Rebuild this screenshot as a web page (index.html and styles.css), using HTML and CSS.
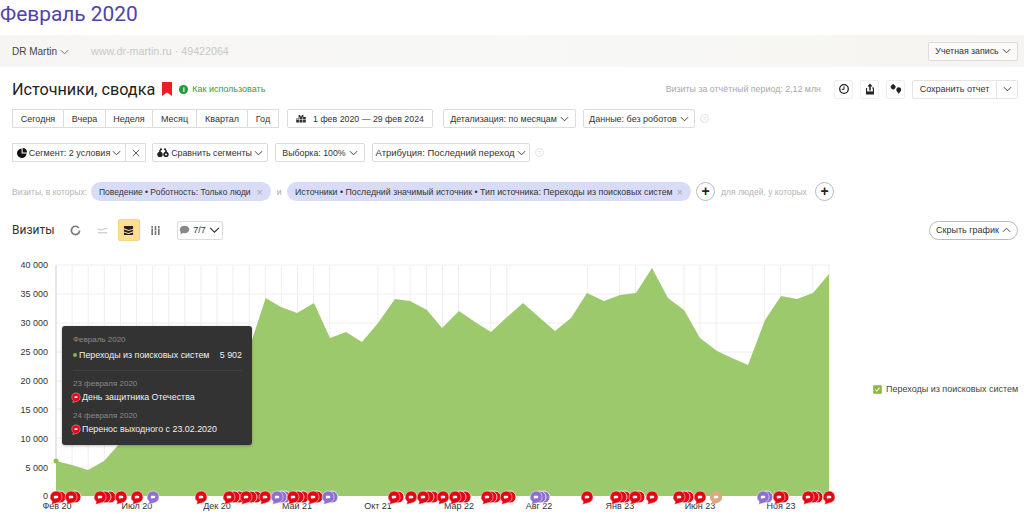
FILE: index.html
```html
<!DOCTYPE html>
<html lang="ru">
<head>
<meta charset="utf-8">
<title>Февраль 2020</title>
<link rel="stylesheet" href="styles.css">
</head>
<body>
<svg class="sprite" width="0" height="0" aria-hidden="true">
  <defs>
    <symbol id="chev" viewBox="0 0 10 6"><path d="M1 1l4 4 4-4" fill="none" stroke="currentColor" stroke-width="1"/></symbol>
    <g id="fr"><path d="M0-6a6 6 0 0 1 2.600 11.400L-4.500 7.500l.7-2.900A6 6 0 0 1 0-6z" fill="#e30613" stroke="#fff" stroke-width=".5"/><path d="M-1.400-1.200h2.800a.8.8 0 0 1 .8.8v.8a.8.8 0 0 1-.8.8h-1.900l-1.100.8v-.8a.8.8 0 0 1-.6-.8v-.8a.8.8 0 0 1 .8-.8z" fill="#fff"/></g>
    <g id="fb"><circle r="6" fill="#e30613" stroke="#fff" stroke-width=".8"/></g>
    <g id="pr"><path d="M0-6a6 6 0 0 1 2.600 11.400L-4.500 7.500l.7-2.900A6 6 0 0 1 0-6z" fill="#8f6fd0" stroke="#fff" stroke-width=".5"/><path d="M-1.400-1.200h2.800a.8.8 0 0 1 .8.8v.8a.8.8 0 0 1-.8.8h-1.900l-1.100.8v-.8a.8.8 0 0 1-.6-.8v-.8a.8.8 0 0 1 .8-.8z" fill="#fff"/></g>
    <g id="pb"><circle r="6" fill="#8f6fd0" stroke="#fff" stroke-width=".8"/></g>
    <g id="or"><path d="M0-6a6 6 0 0 1 2.600 11.400L-4.500 7.500l.7-2.900A6 6 0 0 1 0-6z" fill="#e0a582"/><path d="M-1.400-1.200h2.800a.8.8 0 0 1 .8.8v.8a.8.8 0 0 1-.8.8h-1.900l-1.100.8v-.8a.8.8 0 0 1-.6-.8v-.8a.8.8 0 0 1 .8-.8z" fill="#fff"/></g>
  </defs>
</svg>

<h1 class="page-title">Февраль 2020</h1>

<header class="topbar">
  <span class="topbar-name">DR Martin <svg class="chev chev-thin"><use href="#chev"/></svg></span>
  <span class="topbar-site">www.dr-martin.ru · 49422064</span>
  <button class="btn btn-account">Учетная запись <svg class="chev"><use href="#chev"/></svg></button>
</header>

<section class="report-head">
  <h2 class="report-title">Источники, сводка</h2>
  <svg class="bookmark" viewBox="0 0 10 14"><path d="M0 0h10v14L5 10.500 0 14z"/></svg>
  <a class="howto"><span class="howto-dot">i</span>Как использовать</a>
  <span class="report-meta">Визиты за отчётный период: 2,12 млн</span>
  <button class="btn btn-icon"><svg viewBox="0 0 12 12"><circle cx="6" cy="6" r="4.300" fill="none" stroke="#222" stroke-width="1.300"/><path d="M6 3.400V6.400H3.800" fill="none" stroke="#222"/></svg></button>
  <button class="btn btn-icon"><svg viewBox="0 0 12 12"><path d="M6 .5L3.400 3.400h1.800v4h1.600v-4h1.800z" fill="#222"/><path d="M2.600 5v6h6.800V5H8.200" fill="none" stroke="#222" stroke-width="1.100"/><path d="M2.600 8.400h6.800V11H2.600z" fill="#222"/></svg></button>
  <button class="btn btn-icon"><svg viewBox="0 0 12 12"><path d="M3.200.8L4.200 1.900a2.300 2.300 0 1 1-2.100 0z" fill="#222"/><path d="M8.700 4.300a2.400 2.400 0 0 1 2.400 2.600c0 .4-.1.700-.3 1L8.700 10.700 6.600 7.900a2.400 2.400 0 0 1 2.100-3.600z" fill="#222"/></svg></button>
  <div class="split">
    <button class="btn split-main">Сохранить отчет</button>
    <button class="btn split-caret"><svg class="chev"><use href="#chev"/></svg></button>
  </div>
</section>

<section class="controls controls-a">
  <div class="group">
    <button class="btn g1">Сегодня</button>
    <button class="btn g2">Вчера</button>
    <button class="btn g3">Неделя</button>
    <button class="btn g4">Месяц</button>
    <button class="btn g5">Квартал</button>
    <button class="btn g6">Год</button>
  </div>
  <button class="btn btn-date"><svg class="cal" viewBox="0 0 12 10"><path d="M3 0h2v1.500h2V0h2v2.500h3v7H0v-5h3z" fill="#333"/><path d="M0 5.600h12M4 2.500v7M8 2.500v7" stroke="#fff" stroke-width=".7"/></svg>1 фев 2020 — 29 фев 2024</button>
  <button class="btn btn-detail">Детализация: по месяцам <svg class="chev"><use href="#chev"/></svg></button>
  <button class="btn btn-data">Данные: без роботов <svg class="chev"><use href="#chev"/></svg></button>
  <span class="hint">?</span>
</section>

<section class="controls controls-b">
  <div class="group">
    <button class="btn btn-seg"><svg class="ico9" viewBox="0 0 10 10"><path d="M4.600.4v5h5A4.800 4.800 0 1 1 4.600.4z" fill="#111"/><path d="M5.600 0a4.500 4.500 0 0 1 4.400 4.400H5.600z" fill="#111"/></svg>Сегмент: 2 условия <svg class="chev"><use href="#chev"/></svg></button>
    <button class="btn btn-x"><svg viewBox="0 0 10 10"><path d="M1 1l8 8M9 1l-8 8" stroke="#333" stroke-width="1" fill="none"/></svg></button>
  </div>
  <button class="btn btn-compare"><svg class="ico12" viewBox="0 0 12 10"><circle cx="3" cy="6.400" r="2.700" fill="#222"/><circle cx="9" cy="6.400" r="2.700" fill="#222"/><path d="M3 1.200h2M7 1.200h2" stroke="#222" stroke-width="1.600"/><path d="M3 2v2M9 2v2" stroke="#222" stroke-width="1.600"/><circle cx="9" cy="6.400" r="1" fill="#fff"/></svg>Сравнить сегменты <svg class="chev"><use href="#chev"/></svg></button>
  <button class="btn btn-sample">Выборка: 100% <svg class="chev"><use href="#chev"/></svg></button>
  <button class="btn btn-attr">Атрибуция: Последний переход <svg class="chev"><use href="#chev"/></svg></button>
  <span class="hint">?</span>
</section>

<section class="filters">
  <span class="filters-label">Визиты, в которых:</span>
  <span class="pill pill-a">Поведение • Роботность: Только люди <i class="pill-x">×</i></span>
  <span class="filters-and">и</span>
  <span class="pill pill-b">Источники • Последний значимый источник • Тип источника: Переходы из поисковых систем <i class="pill-x">×</i></span>
  <button class="round">+</button>
  <span class="filters-label filters-people">для людей, у которых</span>
  <button class="round">+</button>
</section>

<section class="chart-head">
  <h3 class="chart-title">Визиты</h3>
  <span class="type"><svg viewBox="0 0 12 12"><path d="M9.600 3.200A4.500 4.500 0 1 0 10.500 6" fill="none" stroke="#777" stroke-width="1.800"/></svg></span>
  <span class="type"><svg viewBox="0 0 12 12"><path d="M1 4.500l3 1 3-1 4-1" fill="none" stroke="#bbb"/><path d="M1 8.500h10" stroke="#bbb"/></svg></span>
  <span class="type type-active"><svg viewBox="0 0 12 12"><path d="M1 1h10v3L6 5.400 1 3.600z" fill="#222"/><path d="M1 4.800l5 1.800 5-1.400v1.600L6 8.600 1 7z" fill="#222"/><path d="M1 8.200l5 1.600 5-1.600V11H1z" fill="#222"/></svg></span>
  <span class="type"><svg viewBox="0 0 12 12"><path d="M1.500 1h1.800v10H1.500zM5.100 1h1.800v10H5.100zM8.700 1h1.800v10H8.700z" fill="#777"/><path d="M1 3.500h3M5 6h3M8.500 3.800h3" stroke="#fff" stroke-width=".6"/></svg></span>
  <button class="btn btn-notes"><svg viewBox="0 0 12 11"><path d="M6 .8c3 0 5.200 1.800 5.200 4.200S9 9.200 6 9.200c-.8 0-1.500-.1-2.100-.3L1.400 10.400l.5-2.500C1.200 7.100.8 6.100.8 5 .8 2.600 3 .8 6 .8z" fill="#888"/></svg>7/7 <svg class="chev"><use href="#chev"/></svg></button>
  <button class="btn btn-hide">Скрыть график <svg class="chev chev-up"><use href="#chev"/></svg></button>
</section>

<section class="chart">
  <svg class="plot" viewBox="0 255 860 262">
    <path class="grid" d="M56 265H829M56 294H829M56 323H829M56 352H829M56 381H829M56 409H829M56 438H829M56 467H829M72.100 265V496M88.200 265V496M104.300 265V496M120.400 265V496M136.500 265V496M152.600 265V496M168.700 265V496M184.800 265V496M200.900 265V496M217 265V496M233.100 265V496M249.200 265V496M265.300 265V496M281.400 265V496M297.500 265V496M313.600 265V496M329.700 265V496M378 265V496M394.100 265V496M410.200 265V496M426.300 265V496M442.400 265V496M458.500 265V496M490.700 265V496M506.800 265V496M587.300 265V496M619.500 265V496M635.600 265V496M684 265V496M700.100 265V496M716.200 265V496M764.500 265V496M780.600 265V496M812.800 265V496M829 265V496"/>
    <path class="axis" d="M56 265V462"/>
    <path class="area" d="M56 461L72 465L88 470L104 461L120 443L136 425L152 410L168 400L185 390L201 380L217 372L233 360L249 352L252 340L265.700 298L281 307L297 313L314 303L330 338L346 332L362 342L378 323L395 299L410 301L427 310L442 328L459 311L475 322L491 332L507 317L523 303L540 318L555 331L571 318L587 293L604 301L620 295L636 293L652 268L668 298L684 310L700 338L717 351L732 358L748 365L765 320L781 296L797 299L813 293L829 274V496H56z"/>
    <circle class="dot" cx="56" cy="461" r="2.500"/>
    <g class="y-labels">
      <text x="48" y="268">40 000</text><text x="48" y="297">35 000</text><text x="48" y="326">30 000</text><text x="48" y="355">25 000</text><text x="48" y="384">20 000</text><text x="48" y="413">15 000</text><text x="48" y="442">10 000</text><text x="48" y="471">5 000</text><text x="48" y="499">0</text>
    </g>
    <g class="x-labels">
      <text x="57" y="509">Фев 20</text><text x="137" y="509">Июл 20</text><text x="217" y="509">Дек 20</text><text x="297" y="509">Май 21</text><text x="378" y="509">Окт 21</text><text x="459" y="509">Мар 22</text><text x="539" y="509">Авг 22</text><text x="620" y="509">Янв 23</text><text x="700" y="509">Июн 23</text><text x="781" y="509">Ноя 23</text>
    </g>
    <g class="flags">
      <use href="#fb" x="60" y="497"/><use href="#fr" x="56" y="497"/>
      <use href="#fb" x="75" y="497"/><use href="#fr" x="71" y="497"/>
      <use href="#fb" x="110" y="497"/><use href="#fb" x="105" y="497"/><use href="#fr" x="100" y="497"/>
      <use href="#fr" x="121" y="497"/><use href="#fr" x="137" y="497"/><use href="#pr" x="153" y="497"/><use href="#fr" x="201" y="497"/>
      <use href="#fb" x="239" y="497"/><use href="#fb" x="234" y="497"/><use href="#fr" x="229" y="497"/>
      <use href="#fb" x="256" y="497"/><use href="#fb" x="251" y="497"/><use href="#fr" x="246" y="497"/>
      <use href="#fr" x="265" y="497"/>
      <use href="#pb" x="285" y="497"/><use href="#pb" x="281" y="497"/><use href="#pr" x="277" y="497"/>
      <use href="#fb" x="303" y="497"/><use href="#fb" x="298" y="497"/><use href="#fr" x="293" y="497"/>
      <use href="#fb" x="317" y="497"/><use href="#fr" x="313" y="497"/>
      <use href="#pb" x="332" y="497"/><use href="#pr" x="328" y="497"/>
      <use href="#fb" x="398" y="497"/><use href="#fr" x="394" y="497"/>
      <use href="#fr" x="411" y="497"/>
      <use href="#fb" x="433" y="497"/><use href="#fb" x="428" y="497"/><use href="#fr" x="423" y="497"/>
      <use href="#fr" x="443" y="497"/>
      <use href="#fb" x="465" y="497"/><use href="#fb" x="460" y="497"/><use href="#fr" x="455" y="497"/>
      <use href="#fb" x="495" y="497"/><use href="#fb" x="491" y="497"/><use href="#fr" x="487" y="497"/>
      <use href="#fb" x="510" y="497"/><use href="#fr" x="506" y="497"/>
      <use href="#pb" x="544" y="497"/><use href="#pb" x="540" y="497"/><use href="#pr" x="536" y="497"/>
      <use href="#fr" x="587" y="497"/>
      <use href="#fb" x="625" y="497"/><use href="#fb" x="621" y="497"/><use href="#fr" x="616" y="497"/>
      <use href="#fb" x="639" y="497"/><use href="#fr" x="635" y="497"/>
      <use href="#fr" x="652" y="497"/>
      <use href="#fb" x="688" y="497"/><use href="#fb" x="684" y="497"/><use href="#fr" x="679" y="497"/>
      <use href="#fr" x="700" y="497"/><use href="#or" x="716" y="497"/>
      <use href="#pb" x="767" y="497"/><use href="#pr" x="763" y="497"/>
      <use href="#fb" x="783" y="497"/><use href="#fr" x="779" y="497"/>
      <use href="#fb" x="817" y="497"/><use href="#fb" x="813" y="497"/><use href="#fr" x="808" y="497"/>
      <use href="#fr" x="829" y="497"/>
    </g>
  </svg>
  <div class="legend"><span class="legend-box"><svg viewBox="0 0 10 10"><path d="M2 5l2 2.200L8 2.500" fill="none" stroke="#fff" stroke-width="1.500"/></svg></span>Переходы из поисковых систем</div>
  <div class="tip">
    <div class="tip-date">Февраль 2020</div>
    <div class="tip-row"><span class="tip-dot"></span><span class="tip-name">Переходы из поисковых систем</span><span class="tip-val">5 902</span></div>
    <hr class="tip-sep">
    <div class="tip-date">23 февраля 2020</div>
    <div class="tip-event"><svg class="tip-flag" viewBox="-7 -7 14 15"><use href="#fr"/></svg>День защитника Отечества</div>
    <div class="tip-date">24 февраля 2020</div>
    <div class="tip-event"><svg class="tip-flag" viewBox="-7 -7 14 15"><use href="#fr"/></svg>Перенос выходного с 23.02.2020</div>
  </div>
</section>
</body>
</html>
```

FILE: styles.css
```css
* { box-sizing: border-box; }
html, body { margin: 0; padding: 0; }
body {
  width: 1024px;
  height: 517px;
  overflow: hidden;
  background: #fff;
  color: #2b2b2b;
  font-family: "Liberation Sans", Arial, sans-serif;
  font-size: 9px;
}
.sprite { position: absolute; }

.page-title {
  margin: 0;
  height: 35px;
  font-family: Roboto, sans-serif;
  font-weight: 400;
  font-size: 20.9px;
  line-height: 28px;
  color: #4f43a8;
}

.btn {
  display: inline-flex;
  align-items: center;
  justify-content: center;
  gap: 3px;
  height: 19px;
  padding: 0;
  background: #fff;
  border: 1px solid #dcdcdc;
  border-radius: 2px;
  color: #333;
  font: inherit;
  white-space: nowrap;
}
.chev { width: 9px; height: 6px; flex: none; color: #333; }
.chev-thin { color: #666; }
.chev-up { transform: rotate(180deg); }

.topbar {
  display: flex;
  align-items: center;
  height: 32px;
  padding: 0 6px 0 12px;
  background: linear-gradient(90deg, #f6f5f3, #f8f8f6 50%, #f5f4f0);
}
.topbar-name { width: 79px; font-size: 10px; color: #444; }
.topbar-site { font-size: 10.7px; color: #c8c8c8; }
.btn-account { margin-left: auto; width: 90px; font-size: 8.8px; background: #fbfaf7; }

.report-head {
  display: flex;
  align-items: center;
  height: 42px;
  padding: 2px 6px 0 12px;
}
.report-title {
  margin: 0;
  font-family: Roboto, sans-serif;
  font-weight: 400;
  font-size: 16.2px;
  color: #222;
}
.bookmark { width: 10px; height: 14px; margin-left: 7px; fill: #f01c23; }
.howto { display: flex; align-items: center; margin-left: 7px; color: #3d9a3d; font-size: 9px; }
.howto-dot {
  display: flex; align-items: center; justify-content: center;
  width: 9px; height: 9px; margin-right: 4px;
  border-radius: 50%;
  background: #1f9d3a; color: #fff; font-size: 7px; font-weight: 700;
}
.report-meta { margin-left: auto; margin-right: 13px; color: #a8a8a8; font-size: 8.85px; }
.btn-icon { width: 19px; margin-right: 7px; border-color: #eee; }
.btn-icon svg { width: 12px; height: 12px; }
.split { display: flex; }
.split-main { width: 85px; border-radius: 2px 0 0 2px; border-color: #e4e4e4; }
.split-caret { width: 22px; margin-left: -1px; border-radius: 0 2px 2px 0; border-color: #e4e4e4; }

.controls { display: flex; align-items: center; padding-left: 12px; }
.controls-a { height: 19px; }
.controls-b { height: 19px; margin-top: 15px; }
.group { display: flex; }
.group .btn { margin-right: -1px; border-radius: 0; }
.g1 { width: 52px; } .g2 { width: 43px; } .g3 { width: 48px; } .g4 { width: 45px; } .g5 { width: 52px; } .g6 { width: 32px; }
.btn-date { width: 146px; margin-left: 9px; gap: 7px; font-size: 8.8px; }
.cal { width: 10px; height: 8px; }
.btn-detail { width: 133px; margin-left: 10px; font-size: 8.85px; }
.btn-data { width: 112px; margin-left: 7px; }
.hint {
  display: flex; align-items: center; justify-content: center;
  width: 9px; height: 9px; margin-left: 5px;
  border: 1px solid #e2e2e2; border-radius: 50%;
  color: #ddd; font-size: 6px;
}
.ico9 { width: 10px; height: 10px; }
.ico12 { width: 12px; height: 10px; }
.btn-seg { width: 114px; gap: 2px; }
.btn-x { width: 21px; }
.btn-x svg { width: 8px; height: 8px; }
.btn-compare { width: 116px; margin-left: 7px; gap: 2px; font-size: 8.85px; }
.btn-sample { width: 90px; margin-left: 7px; font-size: 8.8px; }
.btn-attr { width: 158px; margin-left: 7px; font-size: 9.45px; }

.filters {
  display: flex;
  align-items: center;
  height: 19px;
  margin-top: 20px;
  padding-left: 12px;
  font-size: 8.5px;
}
.filters-label { width: 79px; color: #b5b5b5; white-space: nowrap; }
.filters-people { width: 94px; margin-left: 6px; }
.filters-and { width: 16px; text-align: center; color: #aaa; }
.pill {
  display: flex;
  align-items: center;
  justify-content: space-between;
  height: 19px;
  padding: 0 8px;
  background: #d9dcf7;
  border-radius: 10px;
  color: #333;
  white-space: nowrap;
}
.pill-a { width: 180px; }
.pill-b { width: 404px; font-size: 8.8px; }
.pill-x { color: #aaa; font-style: normal; font-size: 11px; }
.round {
  display: flex; align-items: center; justify-content: center;
  width: 19px; height: 19px; padding: 0 0 1px;
  margin-left: 5px;
  background: #fff;
  border: 1px solid #bbb;
  border-radius: 50%;
  color: #222;
  font: 700 14px "Liberation Sans", sans-serif;
}
.filters-people + .round { margin-left: 0; }

.chart-head {
  display: flex;
  align-items: center;
  height: 22px;
  margin-top: 18px;
  padding: 0 6px 0 12px;
}
.chart-title { margin: 0 10px 0 0; font-family: Roboto, sans-serif; font-weight: 400; font-size: 12px; color: #333; }
.type { display: flex; align-items: center; justify-content: center; width: 22px; height: 22px; margin-right: 4.5px; }
.type svg { width: 11px; height: 11px; }
.type-active { background: #ffdf8f; border: 1px solid #f0d48a; border-radius: 2px; }
.btn-notes { width: 46px; margin-left: 6px; }
.btn-notes svg { width: 11px; height: 10px; }
.btn-hide { width: 89px; margin-left: auto; border-radius: 10px; border-color: #bbb; }

.chart { position: relative; display: flex; align-items: flex-start; height: 262px; margin-top: 14px; }
.plot { display: block; width: 860px; height: 262px; flex: none; }
.grid { fill: none; stroke: #eeeef2; stroke-width: 1; }
.axis { fill: none; stroke: #cfcfcf; }
.area { fill: #9cc96b; }
.dot { fill: #8fc04f; }
.y-labels text { text-anchor: end; font-size: 9px; fill: #333; font-family: "Liberation Sans", sans-serif; }
.x-labels text { text-anchor: middle; font-size: 9px; fill: #333; font-family: "Liberation Sans", sans-serif; }

.legend {
  display: flex;
  align-items: center;
  gap: 4px;
  margin: 129px 0 0 13px;
  font-size: 9px;
  white-space: nowrap;
  color: #444;
}
.legend-box { width: 9px; height: 9px; background: #86bf3e; border: 1px solid #c4b36a; border-radius: 1px; display: flex; }
.legend-box svg { width: 7px; height: 7px; }

.tip {
  position: absolute;
  left: 62px;
  top: 71px;
  width: 190px;
  height: 119px;
  padding: 8px 10px 0 11px;
  background: #333;
  border-radius: 3px;
  color: #f0f0f0;
  font-size: 8.9px;
  box-shadow: 0 1px 3px rgba(0,0,0,.25);
}
.tip-date { height: 11px; line-height: 11px; color: #8a8a8a; font-size: 8px; }
.tip-row { display: flex; align-items: center; height: 11px; margin-top: 4px; }
.tip-dot { width: 4px; height: 4px; margin-right: 2px; background: #7cbb3c; border-radius: 50%; }
.tip-val { margin-left: auto; }
.tip-sep { height: 1px; margin: 10px 0 7px; border: 0; background: #3f3f3f; }
.tip-event { display: flex; align-items: center; height: 12px; margin: 2px 0 7px -2px; gap: 1px; }
.tip-flag { width: 10px; height: 11px; flex: none; }
```
